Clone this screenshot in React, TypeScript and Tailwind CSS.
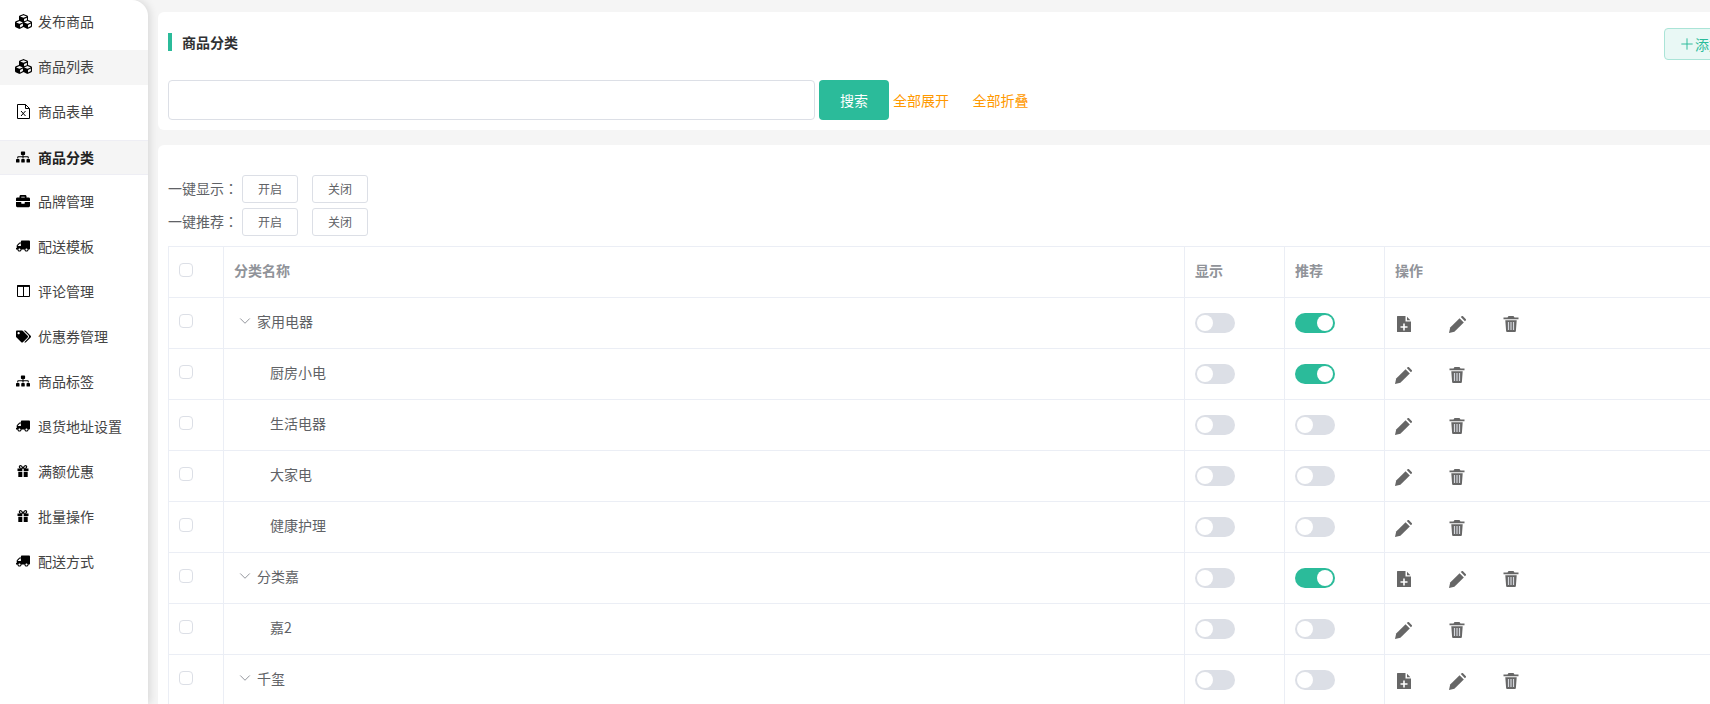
import {
  FaBriefcase,
  FaCubes,
  FaSitemap,
  FaTags,
  FaTruck,
} from 'react-icons/fa';
import {ChevronDown, Plus} from 'lucide-react';
import type {ReactNode} from 'react';

const font = 'font-["Microsoft_YaHei","Noto_Sans_CJK_SC","Noto_Sans",sans-serif]';

const truck = <FaTruck size={14} className="-scale-x-100" />;

const fileExcel = (
  <svg width="13" height="15" viewBox="0 0 13 15" fill="none" stroke="currentColor" strokeWidth="1">
    <path d="M.5.5h8l4 4v10H.5z" />
    <path d="M8.5.5v4h4" />
    <path d="M4 7l4.5 5M8.5 7L4 12" />
  </svg>
);

const columns = (
  <svg width="13" height="12" viewBox="0 0 13 12" fill="none" stroke="currentColor">
    <path strokeWidth="1" d="M.5.5h12v11H.5zM6.5.5v11" />
    <path strokeWidth="1.5" d="M0 1.2h13" />
  </svg>
);

const gift = (
  <svg width="12" height="12" viewBox="0 0 12 12">
    <path fill="none" stroke="currentColor" strokeWidth="1.1" d="M6 3.200C5 1 3.800.5 3 .7c-1 .3-.9 2 .3 2.500zM6 3.200C7 1 8.200.5 9 .7c1 .3.9 2-.3 2.500z" />
    <path fill="currentColor" d="M.5 3.500h4.800V6H.5zM6.700 3.500h4.800V6H6.700zM1.300 6.700h4V12h-4zM6.700 6.700h4V12h-4z" />
  </svg>
);

const menu: {label: string; icon: ReactNode; tone?: 'hover' | 'active'}[] = [
  {label: '发布商品', icon: <FaCubes size={17} />},
  {label: '商品列表', icon: <FaCubes size={17} />, tone: 'hover'},
  {label: '商品表单', icon: fileExcel},
  {label: '商品分类', icon: <FaSitemap size={14} />, tone: 'active'},
  {label: '品牌管理', icon: <FaBriefcase size={14} />},
  {label: '配送模板', icon: truck},
  {label: '评论管理', icon: columns},
  {label: '优惠券管理', icon: <FaTags size={15} />},
  {label: '商品标签', icon: <FaSitemap size={14} />},
  {label: '退货地址设置', icon: truck},
  {label: '满额优惠', icon: gift},
  {label: '批量操作', icon: gift},
  {label: '配送方式', icon: truck},
];

const rows = [
  {name: '家用电器', parent: true, show: false, rec: true},
  {name: '厨房小电', parent: false, show: false, rec: true},
  {name: '生活电器', parent: false, show: false, rec: false},
  {name: '大家电', parent: false, show: false, rec: false},
  {name: '健康护理', parent: false, show: false, rec: false},
  {name: '分类嘉', parent: true, show: false, rec: true},
  {name: '嘉2', parent: false, show: false, rec: false},
  {name: '千玺', parent: true, show: false, rec: false},
];

function FileAdd() {
  return (
    <svg width="14" height="16" viewBox="0 0 14 16" className="mr-px text-[#666]">
      <path fill="currentColor" d="M0 .6A.6.6 0 0 1 .6 0h7.900v5.500H14v9.900a.6.6 0 0 1-.6.6H.6a.6.6 0 0 1-.6-.6z" />
      <path fill="currentColor" d="M10 .8l3.400 3.400H10z" />
      <path stroke="#fff" strokeWidth="1.600" d="M7 7.500v7M3.500 11h7" />
    </svg>
  );
}

function Pencil() {
  return (
    <svg width="17" height="17" viewBox="0 0 17 17" className="text-[#666]">
      <path fill="currentColor" d="M0 17l1.200-5.400L10.600 2.200l4.200 4.200-9.400 9.400z" />
      <path fill="currentColor" d="M11.800 1L12.600.3a1 1 0 0 1 1.400 0l2.700 2.700a1 1 0 0 1 0 1.400l-.8.8z" />
    </svg>
  );
}

function Trash() {
  return (
    <svg width="16" height="16" viewBox="0 0 16 16" className="text-[#666]">
      <path fill="currentColor" d="M5.500 0h5l1 1.600h4V3.200H.5V1.600h4z" />
      <path fill="currentColor" d="M2.300 4.200h11.400l-.8 10.900a1 1 0 0 1-1 .9H4.100a1 1 0 0 1-1-.9z" />
      <path stroke="#d5d8de" strokeWidth="1.200" d="M5.500 6v8M8 6v8M10.500 6v8" />
    </svg>
  );
}

function Toggle({on}: {on: boolean}) {
  return (
    <span className={`flex h-5 w-10 items-center rounded-full px-0.5 ${on ? 'justify-end bg-[#2bbb9a]' : 'bg-[#dcdfe6]'}`}>
      <span className="h-4 w-4 rounded-full bg-white" />
    </span>
  );
}

function Checkbox() {
  return <span className="block h-3.5 w-3.5 -translate-y-0.5 rounded-sm border border-[#dcdfe6] bg-white" />;
}

function OutlineBtn({children}: {children: ReactNode}) {
  return (
    <button className="h-7 w-14 rounded-[3px] border border-[#dcdfe6] bg-white text-xs text-[#606266]">
      {children}
    </button>
  );
}

function BulkRow({label, className}: {label: string; className?: string}) {
  return (
    <div className={`flex h-7 items-center text-sm text-[#606266] ${className ?? ''}`}>
      <span className="w-[74px] pb-[3px]">
        {label}
        <span className='font-["Noto_Sans_CJK_TC"]'>：</span>
      </span>
      <OutlineBtn>开启</OutlineBtn>
      <span className="w-3.5" />
      <OutlineBtn>关闭</OutlineBtn>
    </div>
  );
}

export default function App() {
  return (
    <div className={`flex h-[704px] w-[1710px] overflow-hidden bg-[#f5f5f5] ${font}`}>
      <aside className="z-10 flex w-[148px] shrink-0 flex-col gap-2.5 rounded-tr-2xl bg-white pt-[5px] shadow-[2px_0_8px_rgba(0,0,0,0.12)]">
        {menu.map(item => (
          <div
            key={item.label}
            className={`flex h-[35px] shrink-0 items-center text-sm ${
              item.tone === 'hover' ? 'bg-[#f5f5f5] pb-[3px] text-[#333]' : ''
            } ${item.tone === 'active' ? 'border-y border-[#eeeef4] bg-[#f5f5f5] pb-px font-bold text-[#222]' : 'pb-[3px] text-[#444]'}`}
          >
            <span className="flex w-[38px] shrink-0 justify-center pl-2 text-black">{item.icon}</span>
            <span className="whitespace-nowrap">{item.label}</span>
          </div>
        ))}
      </aside>

      <main className="flex min-w-0 flex-1 flex-col gap-[15px] overflow-hidden pl-2.5 pt-3">
        <section className="h-[118px] w-[1800px] shrink-0 rounded-md bg-white px-2.5 pt-[21px]">
          <div className="flex h-[18px] items-center justify-between">
            <h2 className="border-l-4 border-[#2bbb9a] pl-2.5 text-sm leading-[18px] font-bold text-[#303133]">商品分类</h2>
            <button className="mr-[144px] flex h-8 w-[140px] translate-y-0.5 items-center rounded border border-[#aae4d7] bg-[#e9f8f5] pl-[13px] text-sm text-[#2bbb9a]">
              <Plus size={18} strokeWidth={1.3} className="-mr-px" />
              添加分类
            </button>
          </div>
          <div className="mt-[29px] flex h-10 items-center">
            <input className="h-10 w-[647px] rounded border border-[#dcdfe6] bg-white outline-none" />
            <button className="ml-1 h-10 w-[70px] rounded bg-[#2bbb9a] text-sm text-white">搜索</button>
            <span className="ml-1 text-sm text-[#ff9900]">全部展开</span>
            <span className="ml-[23.5px] text-sm text-[#ff9900]">全部折叠</span>
          </div>
        </section>

        <section className="w-[1800px] flex-1 rounded-t-md bg-white px-2.5 pt-[30px]">
          <BulkRow label="一键显示" />
          <BulkRow label="一键推荐" className="mt-[5px]" />

          <table className="mt-2.5 table-fixed border-collapse text-sm text-[#606266]">
            <colgroup>
              <col className="w-[55px]" />
              <col className="w-[961px]" />
              <col className="w-[100px]" />
              <col className="w-[100px]" />
              <col className="w-[500px]" />
            </colgroup>
            <thead>
              <tr className="h-[51px] text-left font-bold text-[#909399]">
                <th className="border border-[#ebeef5] pl-2.5"><Checkbox /></th>
                <th className="border border-[#ebeef5] pb-[5px] pl-2.5">分类名称</th>
                <th className="border border-[#ebeef5] pb-[5px] pl-2.5">显示</th>
                <th className="border border-[#ebeef5] pb-[5px] pl-2.5">推荐</th>
                <th className="border border-[#ebeef5] pb-[5px] pl-2.5">操作</th>
              </tr>
            </thead>
            <tbody>
              {rows.map(row => (
                <tr key={row.name} className="h-[51px]">
                  <td className="border border-[#ebeef5] pl-2.5"><Checkbox /></td>
                  <td className="border border-[#ebeef5] pb-[5px] pl-3">
                    {row.parent ? (
                      <span className="flex items-center gap-[3px]">
                        <ChevronDown size={18} strokeWidth={1.3} className="text-[#909399]" />
                        {row.name}
                      </span>
                    ) : (
                      <span className="pl-[34px]">{row.name}</span>
                    )}
                  </td>
                  <td className="border border-[#ebeef5] pl-2.5"><Toggle on={row.show} /></td>
                  <td className="border border-[#ebeef5] pl-2.5"><Toggle on={row.rec} /></td>
                  <td className={`border border-[#ebeef5] ${row.parent ? 'pl-3' : 'pl-2.5'}`}>
                    <span className="flex items-center gap-[37px] pt-0.5">
                      {row.parent && <FileAdd />}
                      <Pencil />
                      <Trash />
                    </span>
                  </td>
                </tr>
              ))}
            </tbody>
          </table>
        </section>
      </main>
    </div>
  );
}
